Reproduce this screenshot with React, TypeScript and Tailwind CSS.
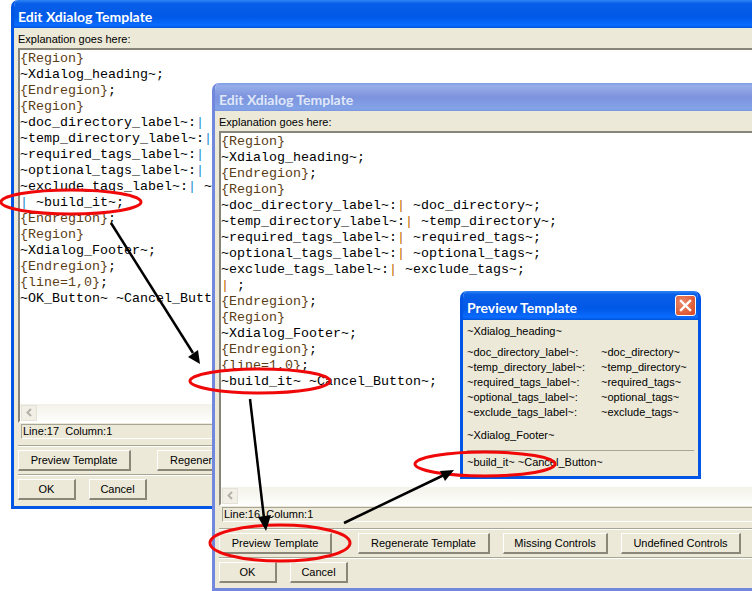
const MONO = "font-['Liberation_Mono',monospace]"

function Code({ lines }: { lines: React.ReactNode[] }) {
  return (
    <div className={`${MONO} pt-[1px] text-[13.33px] leading-[16px] text-black whitespace-pre`}>
      {lines.map((line, i) => (
        <div key={i} className="h-4">{line}</div>
      ))}
    </div>
  )
}

const Br = ({ children }: { children: React.ReactNode }) => <span className="text-[#5c3d14]">{children}</span>
const Bar = ({ dim }: { dim?: boolean }) => <span className={dim ? 'text-[#c06a00]' : 'text-[#1c8ad0]'}>|</span>

function XpButton({ label, className }: { label: string; className: string }) {
  return (
    <button
      type="button"
      className={`flex h-[21px] items-center justify-center border-t border-l border-t-white border-l-white border-r-2 border-b-2 border-r-[#8a8778] border-b-[#8a8778] bg-[#ece9d8] text-[11px] text-black ${className}`}
    >
      {label}
    </button>
  )
}

function ScrollArrow() {
  return (
    <div className="flex h-[16px] w-[16px] items-center justify-center border border-[#e4e2d6] bg-[#f1efe6]">
      <svg width="6" height="9" viewBox="0 0 6 9">
        <path d="M5 1 L1.5 4.5 L5 8" fill="none" stroke="#b4b2a8" strokeWidth="2" />
      </svg>
    </div>
  )
}

function Separator() {
  return <div className="h-[2px] border-t border-t-[#a7a594] border-b border-b-white" />
}

function EditWindow({
  active,
  lines,
  status,
  buttons,
  className,
}: {
  active: boolean
  lines: React.ReactNode[]
  status: string
  buttons: React.ReactNode
  className: string
}) {
  return (
    <div
      className={`absolute flex flex-col overflow-hidden rounded-t-[7px] border-x-[3px] border-b-[3px] ${
        active ? 'border-[#0055e5]' : 'border-[#7288dc]'
      } ${className}`}
    >
      <div
        className={`-mx-[3px] flex h-[28px] shrink-0 items-center pt-[4px] pl-[7px] font-['Lato',sans-serif] text-[14px] font-bold ${
          active
            ? 'bg-[linear-gradient(#2f86f5_0,#0a5fe8_12%,#0058e6_60%,#0a6cff_90%,#0053d8_100%)] text-white'
            : 'bg-[linear-gradient(#7f9ce6_0,#97aeea_10%,#7d93dd_50%,#83a3e8_92%,#7a96df_100%)] text-[#dfe8f8]'
        }`}
      >
        Edit Xdialog Template
      </div>
      <div className="flex min-h-0 flex-1 flex-col bg-[#ece9d8] pr-[11px] pl-[4px] font-['Liberation_Sans',sans-serif] text-[11px] text-black">
        <div className="h-[20px] pt-[4px] leading-[15px]">Explanation goes here:</div>
        <div className="flex h-[375px] flex-col border-2 border-t-[#87857a] border-l-[#87857a] border-r-white border-b-white bg-white">
          <div className="min-h-0 flex-1 overflow-hidden">
            <Code lines={lines} />
          </div>
          <div className="flex h-[17px] items-center bg-[linear-gradient(#f3f2ea,#fdfdfb)] pl-px">
            <ScrollArrow />
          </div>
        </div>
        <div className="mt-[1px] ml-[3px] flex h-[15px] items-center border-t border-l border-t-[#a7a594] border-l-[#a7a594] border-b border-b-white pl-[1px] whitespace-pre">
          {status}
        </div>
        <div className="mt-[6px]"><Separator /></div>
        {buttons}
      </div>
    </div>
  )
}

const firstLines: React.ReactNode[] = [
  <><Br>{'{Region}'}</Br></>,
  '~Xdialog_heading~;',
  <><Br>{'{Endregion}'}</Br>;</>,
  <><Br>{'{Region}'}</Br></>,
  <>~doc_directory_label~:<Bar /></>,
  <>~temp_directory_label~:<Bar /></>,
  <>~required_tags_label~:<Bar /></>,
  <>~optional_tags_label~:<Bar /></>,
  <>~exclude_tags_label~:<Bar /> ~exclude_tags~;</>,
  <><Bar /> ~build_it~;</>,
  <><Br>{'{Endregion}'}</Br>;</>,
  <><Br>{'{Region}'}</Br></>,
  '~Xdialog_Footer~;',
  <><Br>{'{Endregion}'}</Br>;</>,
  <><Br>{'{line=1,0}'}</Br>;</>,
  '~OK_Button~ ~Cancel_Button~;',
]

const secondLines: React.ReactNode[] = [
  <><Br>{'{Region}'}</Br></>,
  '~Xdialog_heading~;',
  <><Br>{'{Endregion}'}</Br>;</>,
  <><Br>{'{Region}'}</Br></>,
  <>~doc_directory_label~:<Bar dim /> ~doc_directory~;</>,
  <>~temp_directory_label~:<Bar dim /> ~temp_directory~;</>,
  <>~required_tags_label~:<Bar dim /> ~required_tags~;</>,
  <>~optional_tags_label~:<Bar dim /> ~optional_tags~;</>,
  <>~exclude_tags_label~:<Bar dim /> ~exclude_tags~;</>,
  <><Bar dim /> ;</>,
  <><Br>{'{Endregion}'}</Br>;</>,
  <><Br>{'{Region}'}</Br></>,
  '~Xdialog_Footer~;',
  <><Br>{'{Endregion}'}</Br>;</>,
  <><Br>{'{line=1,0}'}</Br>;</>,
  '~build_it~ ~Cancel_Button~;',
]

const previewRows = [
  ['~doc_directory_label~:', '~doc_directory~'],
  ['~temp_directory_label~:', '~temp_directory~'],
  ['~required_tags_label~:', '~required_tags~'],
  ['~optional_tags_label~:', '~optional_tags~'],
  ['~exclude_tags_label~:', '~exclude_tags~'],
]

function PreviewDialog() {
  return (
    <div className="absolute top-[291px] left-[460px] flex h-[188px] w-[241px] flex-col overflow-hidden rounded-t-[7px] border-x-[3px] border-b-[3px] border-[#0055e5] font-['Liberation_Sans',sans-serif]">
      <div className="-mx-[3px] flex h-[29px] shrink-0 items-center justify-between bg-[linear-gradient(#2f86f5_0,#0a5fe8_12%,#0058e6_60%,#0a6cff_90%,#0053d8_100%)] pr-[5px] pl-[7px] font-['Lato',sans-serif] text-[14px] font-bold text-white">
        <span className="pt-[3px]">Preview Template</span>
        <div className="flex h-[21px] w-[21px] items-center justify-center rounded-[3px] border border-white bg-[radial-gradient(circle_at_35%_35%,#ea8b6c,#d9441c)]">
          <svg width="13" height="13" viewBox="0 0 13 13">
            <path d="M2 2 L11 11 M11 2 L2 11" stroke="white" strokeWidth="2.4" strokeLinecap="square" />
          </svg>
        </div>
      </div>
      <div className="flex flex-1 flex-col bg-[#ece9d8] px-[4px] text-[11px] leading-[15px] text-black">
        <div className="mt-[4px]">~Xdialog_heading~</div>
        <div className="mt-[6px] grid grid-cols-[134px_1fr]">
          {previewRows.map(([label, value]) => (
            <div key={label} className="contents">
              <div>{label}</div>
              <div>{value}</div>
            </div>
          ))}
        </div>
        <div className="mt-[8px]">~Xdialog_Footer~</div>
        <div className="mt-[7px] h-px bg-[#a7a594]" />
        <div className="mt-[4px]">~build_it~ ~Cancel_Button~</div>
      </div>
    </div>
  )
}

function Annotations() {
  return (
    <svg className="absolute top-0 left-0" width="752" height="591" viewBox="0 0 752 591" fill="none">
      <ellipse cx="71" cy="202" rx="70" ry="12" stroke="#f00808" strokeWidth="3" />
      <ellipse cx="260" cy="381" rx="70" ry="12" stroke="#f00808" strokeWidth="3" />
      <ellipse cx="280" cy="543" rx="70" ry="18" stroke="#f00808" strokeWidth="3" />
      <ellipse cx="485" cy="464" rx="70" ry="12" stroke="#f00808" strokeWidth="3" />
      <path d="M111 223 L193 353" stroke="black" strokeWidth="2.5" />
      <path d="M200 364 L188 357 L198 350 Z" fill="black" />
      <path d="M250 399 L264 518" stroke="black" strokeWidth="2.5" />
      <path d="M266 531 L258 517 L271 515 Z" fill="black" />
      <path d="M344 523 L444 475" stroke="black" strokeWidth="2.5" />
      <path d="M454 470 L440 471 L445 481 Z" fill="black" />
    </svg>
  )
}

export default function App() {
  return (
    <div className="relative h-[591px] w-[752px] overflow-hidden bg-white">
      <EditWindow
        active
        className="top-0 left-[11px] h-[509px] w-[780px]"
        lines={firstLines}
        status="Line:17  Column:1"
        buttons={
          <>
            <div className="mt-[3px] flex gap-[26px]">
              <XpButton label="Preview Template" className="w-[113px]" />
              <XpButton label="Regenerate Template" className="w-[132px]" />
            </div>
            <div className="mt-[3px]"><Separator /></div>
            <div className="mt-[3px] flex gap-[13px]">
              <XpButton label="OK" className="w-[58px]" />
              <XpButton label="Cancel" className="w-[58px]" />
            </div>
          </>
        }
      />
      <EditWindow
        active={false}
        className="top-[83px] left-[212px] h-[508px] w-[580px]"
        lines={secondLines}
        status="Line:16  Column:1"
        buttons={
          <>
            <div className="mt-[3px] flex gap-[26px]">
              <XpButton label="Preview Template" className="w-[113px]" />
              <div className="flex gap-[13px]">
                <XpButton label="Regenerate Template" className="w-[132px]" />
                <XpButton label="Missing Controls" className="w-[105px]" />
                <XpButton label="Undefined Controls" className="w-[120px]" />
              </div>
            </div>
            <div className="mt-[3px]"><Separator /></div>
            <div className="mt-[3px] flex gap-[13px]">
              <XpButton label="OK" className="w-[58px]" />
              <XpButton label="Cancel" className="w-[58px]" />
            </div>
          </>
        }
      />
      <PreviewDialog />
      <Annotations />
    </div>
  )
}
